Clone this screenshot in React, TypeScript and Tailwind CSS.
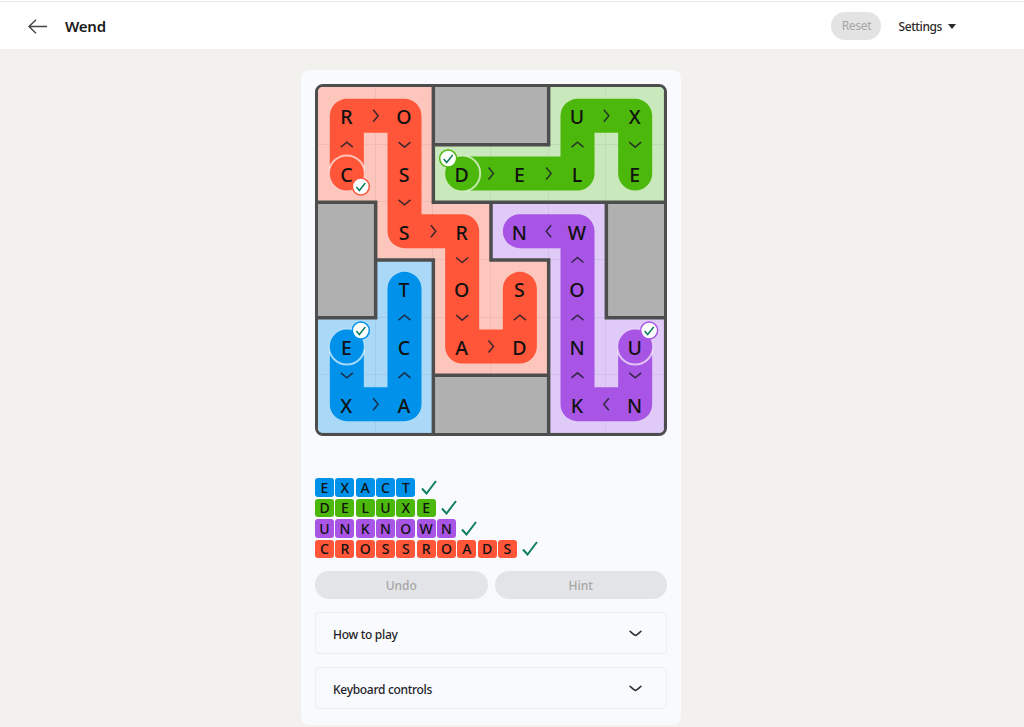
import React from 'react';

const CELL = 346 / 6;
const mid = (i: number) => (i + 0.5) * CELL;

type Tone = 'red' | 'green' | 'blue' | 'purple';

const FILL: Record<Tone, string> = {
  red: '#ff5539',
  green: '#4cb80b',
  blue: '#0091ea',
  purple: '#a855e5',
};

const CELL_BG: Record<string, string> = {
  r: 'bg-[#fcc6bd] border-r border-b border-black/5',
  g: 'bg-[#c9e8bb] border-r border-b border-black/5',
  u: 'bg-[#aad9f8] border-r border-b border-black/5',
  p: 'bg-[#e0caf7] border-r border-b border-black/5',
  a: 'bg-[#b0b0b0]',
  b: 'bg-[#b0b0b0]',
  c: 'bg-[#b0b0b0]',
  d: 'bg-[#b0b0b0]',
};

const REGIONS = ['rraagg', 'rrgggg', 'brrppc', 'burrpc', 'uurrpp', 'uuddpp'];
const LETTERS = ['RO  UX', 'CSDELE', ' SRNW ', ' TOSO ', 'ECADNU', 'XA  KN'];

const PATHS: { tone: Tone; cells: [number, number][]; badge: [number, number] }[] = [
  { tone: 'red', badge: [14, 13], cells: [[1, 0], [0, 0], [0, 1], [1, 1], [2, 1], [2, 2], [3, 2], [4, 2], [4, 3], [3, 3]] },
  { tone: 'green', badge: [-14, -15], cells: [[1, 2], [1, 3], [1, 4], [0, 4], [0, 5], [1, 5]] },
  { tone: 'blue', badge: [14, -16], cells: [[4, 0], [5, 0], [5, 1], [4, 1], [3, 1]] },
  { tone: 'purple', badge: [14, -16], cells: [[4, 5], [5, 5], [5, 4], [4, 4], [3, 4], [2, 4], [2, 3]] },
];

const WORDS: { word: string; chip: string }[] = [
  { word: 'EXACT', chip: 'bg-[#0091ea]' },
  { word: 'DELUXE', chip: 'bg-[#4cb80b]' },
  { word: 'UNKNOWN', chip: 'bg-[#a855e5]' },
  { word: 'CROSSROADS', chip: 'bg-[#ff5539]' },
];

// walls go wherever two neighbouring cells belong to different regions
const wallSegments = () => {
  const out: string[] = [];
  for (let r = 0; r < 6; r++) {
    for (let c = 0; c < 6; c++) {
      if (c < 5 && REGIONS[r][c] !== REGIONS[r][c + 1]) {
        out.push(`M${(c + 1) * CELL} ${r * CELL}V${(r + 1) * CELL}`);
      }
      if (r < 5 && REGIONS[r][c] !== REGIONS[r + 1][c]) {
        out.push(`M${c * CELL} ${(r + 1) * CELL}H${(c + 1) * CELL}`);
      }
    }
  }
  return out.join('');
};

const Chevron: React.FC<{ from: [number, number]; to: [number, number] }> = ({ from, to }) => {
  const x = (mid(from[1]) + mid(to[1])) / 2;
  const y = (mid(from[0]) + mid(to[0])) / 2;
  const dx = to[1] - from[1];
  const dy = to[0] - from[0];
  let d = '';
  if (dx === 1) d = `M${x - 2.5} ${y - 6}L${x + 2.5} ${y}L${x - 2.5} ${y + 6}`;
  if (dx === -1) d = `M${x + 2.5} ${y - 6}L${x - 2.5} ${y}L${x + 2.5} ${y + 6}`;
  if (dy === 1) d = `M${x - 6} ${y - 2.5}L${x} ${y + 2.5}L${x + 6} ${y - 2.5}`;
  if (dy === -1) d = `M${x - 6} ${y + 2.5}L${x} ${y - 2.5}L${x + 6} ${y + 2.5}`;
  return <path d={d} fill="none" stroke="#1f1f2a" strokeWidth="1.5" opacity="0.85" />;
};

const Board: React.FC = () => (
  <div className="relative grid h-[352px] w-[352px] grid-cols-6 grid-rows-6 overflow-hidden rounded-lg border-[3px] border-[#4d4d4d]">
    {REGIONS.flatMap((row, r) =>
      row.split('').map((region, c) => (
        <div key={`${r}-${c}`} className={`flex items-center justify-center pt-[3px] ${CELL_BG[region]}`}>
          <span className="relative z-10 text-[19.5px] font-medium text-[#111111]">{LETTERS[r][c].trim()}</span>
        </div>
      )),
    )}
    <svg className="absolute inset-0" width="346" height="346" viewBox="0 0 346 346">
      <path d={wallSegments()} stroke="#4d4d4d" strokeWidth="3.5" strokeLinecap="square" fill="none" />
      {PATHS.map(({ tone, cells, badge }) => {
        const [sr, sc] = cells[0];
        const points = cells.map(([r, c]) => `${mid(c)},${mid(r)}`).join(' ');
        return (
          <g key={tone}>
            <mask id={`ring-${tone}`} maskUnits="userSpaceOnUse" x="0" y="0" width="346" height="346">
              <polyline points={points} fill="none" stroke="#ffffff" strokeWidth="36" strokeLinecap="round" strokeLinejoin="round" />
            </mask>
            <polyline points={points} fill="none" stroke={FILL[tone]} strokeWidth="34" strokeLinecap="round" strokeLinejoin="round" />
            {cells.slice(1).map((cell, i) => (
              <Chevron key={i} from={cells[i]} to={cell} />
            ))}
            <circle
              cx={mid(sc)}
              cy={mid(sr)}
              r="18"
              fill={FILL[tone]}
              stroke="#ffffff"
              strokeOpacity="0.65"
              strokeWidth="2"
              mask={`url(#ring-${tone})`}
            />
            <circle cx={mid(sc) + badge[0]} cy={mid(sr) + badge[1]} r="8.5" fill="#ffffff" stroke={FILL[tone]} strokeWidth="1.5" />
            <path
              d={`M${mid(sc) + badge[0] - 4.5} ${mid(sr) + badge[1] + 0.5}l3 3.5l6 -7.5`}
              fill="none"
              stroke="#0f7d5f"
              strokeWidth="1.5"
            />
          </g>
        );
      })}
    </svg>
  </div>
);

const Accordion: React.FC<{ title: string }> = ({ title }) => (
  <div className="flex h-[42px] items-center justify-between rounded border border-[#eceef3] pl-[17px] pr-[24px]">
    <span className="pt-[3px] text-[12px] font-medium tracking-[-0.3px] text-[#1f2328]">{title}</span>
    <svg width="13" height="7" viewBox="0 0 13 7" fill="none">
      <path d="M1 1.2C3 3 5 5 6.5 5.5C8 5 10 3 12 1.2" stroke="#2b2b2b" strokeWidth="1.5" strokeLinecap="round" />
    </svg>
  </div>
);

export default function App() {
  return (
    <div className="min-h-screen bg-[#f2f1ed] font-['Noto_Sans',sans-serif]">
      <header className="h-[49px] bg-white">
        <div className="relative top-px h-px bg-[#e8e8e8]" />
        <div className="flex h-[48px] items-center pl-[28px] pr-[68px] pt-[2px]">
          <svg width="19" height="15" viewBox="0 0 19 15" fill="none">
            <path d="M19 7.5H1M8 0.7L1 7.5L8 14.3" stroke="#444444" strokeWidth="1.4" />
          </svg>
          <h1 className="ml-[18px] text-[15px] font-semibold tracking-[-0.2px] text-[#1a1a1a]">Wend</h1>
          <button className="ml-auto h-[28px] w-[50px] rounded-full bg-[#e3e3e3] text-[12px] tracking-[-0.3px] text-[#a6a6a6]">Reset</button>
          <span className="ml-[17px] pt-[1px] text-[12px] font-medium tracking-[-0.4px] text-[#2b2b2b]">Settings</span>
          <span className="ml-[6px] h-0 w-0 border-x-[4px] border-t-[5px] border-x-transparent border-t-[#2b2b2b]" />
        </div>
      </header>

      <main className="ml-[301px] mt-[21px] w-[380px] rounded-lg bg-[#f8fafe] px-[14px] pb-[16px] pt-[14px]">
        <Board />

        <div className="mt-[42px] flex flex-col gap-[2px]">
          {WORDS.map(({ word, chip }) => (
            <div key={word} className="flex items-center gap-[1.33px]">
              {word.split('').map((letter, i) => (
                <span
                  key={i}
                  className={`flex h-[18.5px] w-[19px] items-center justify-center rounded-[3px] text-[14px] font-medium text-[#111111] ${chip}`}
                >
                  {letter}
                </span>
              ))}
              <svg className="ml-[4px]" width="16" height="15" viewBox="0 0 16 15" fill="none">
                <path d="M1 8.5L5.5 13.5L15 1" stroke="#0f7d5f" strokeWidth="2" />
              </svg>
            </div>
          ))}
        </div>

        <div className="mt-[13px] flex gap-[7px]">
          <button className="h-[28px] flex-1 rounded-full bg-[#e3e4e7] pt-[2px] text-[12px] font-medium text-[#a6a6a6]">Undo</button>
          <button className="h-[28px] flex-1 rounded-full bg-[#e3e4e7] pt-[2px] text-[12px] font-medium text-[#a6a6a6]">Hint</button>
        </div>

        <div className="mt-[13px] flex flex-col gap-[13px]">
          <Accordion title="How to play" />
          <Accordion title="Keyboard controls" />
        </div>
      </main>
    </div>
  );
}
